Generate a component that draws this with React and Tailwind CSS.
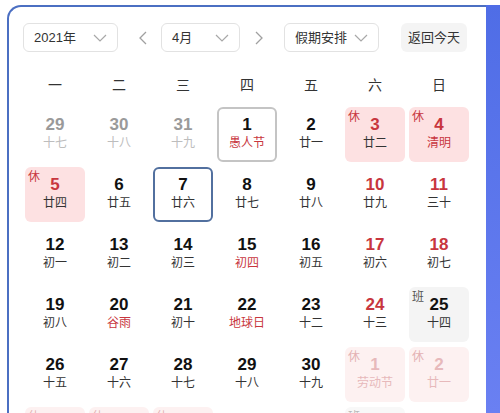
import React from "react";

const RED = "text-[#c8363e]";

const weekdays = ["一", "二", "三", "四", "五", "六", "日"];

// t: prev | next ; tag: 休 | 班 ; box: today | selected ; redNum / redLunar
const days = [
  { d: 29, l: "十七", t: "prev" },
  { d: 30, l: "十八", t: "prev" },
  { d: 31, l: "十九", t: "prev" },
  { d: 1, l: "愚人节", redLunar: true, box: "selected" },
  { d: 2, l: "廿一" },
  { d: 3, l: "廿二", tag: "休", redNum: true },
  { d: 4, l: "清明", tag: "休", redNum: true, redLunar: true },

  { d: 5, l: "廿四", tag: "休", redNum: true },
  { d: 6, l: "廿五" },
  { d: 7, l: "廿六", box: "today" },
  { d: 8, l: "廿七" },
  { d: 9, l: "廿八" },
  { d: 10, l: "廿九", redNum: true },
  { d: 11, l: "三十", redNum: true },

  { d: 12, l: "初一" },
  { d: 13, l: "初二" },
  { d: 14, l: "初三" },
  { d: 15, l: "初四", redLunar: true },
  { d: 16, l: "初五" },
  { d: 17, l: "初六", redNum: true },
  { d: 18, l: "初七", redNum: true },

  { d: 19, l: "初八" },
  { d: 20, l: "谷雨", redLunar: true },
  { d: 21, l: "初十" },
  { d: 22, l: "地球日", redLunar: true },
  { d: 23, l: "十二" },
  { d: 24, l: "十三", redNum: true },
  { d: 25, l: "十四", tag: "班" },

  { d: 26, l: "十五" },
  { d: 27, l: "十六" },
  { d: 28, l: "十七" },
  { d: 29, l: "十八" },
  { d: 30, l: "十九" },
  { d: 1, l: "劳动节", t: "next", tag: "休" },
  { d: 2, l: "廿一", t: "next", tag: "休" },

  { d: 3, l: "廿二", t: "next", tag: "休" },
  { d: 4, l: "青年节", t: "next", tag: "休" },
  { d: 5, l: "立夏", t: "next", tag: "休" },
  { d: 6, l: "廿五", t: "next" },
  { d: 7, l: "廿六", t: "next" },
  { d: 8, l: "廿七", t: "next", tag: "班" },
  { d: 9, l: "母亲节", t: "next" },
];

const Chevron = () => (
  <svg width="14" height="8" viewBox="0 0 14 8" fill="none">
    <polyline points="1,1 7,7 13,1" stroke="#a8a8a8" strokeWidth="1.2" />
  </svg>
);

const Arrow = ({ dir }) => (
  <svg width="8" height="14" viewBox="0 0 8 14" fill="none">
    <polyline
      points={dir === "left" ? "7,1 1,7 7,13" : "1,1 7,7 1,13"}
      stroke="#a0a0a0"
      strokeWidth="1.3"
    />
  </svg>
);

const Select = ({ label, width }) => (
  <div
    className={`h-[29px] ${width} flex items-center justify-between pl-[10px] pr-[10px] border border-[#e2e2e2] rounded-[6px] bg-white text-[13px] text-[#333]`}
  >
    <span>{label}</span>
    <Chevron />
  </div>
);

const DayCell = ({ day }) => {
  const faded = day.t === "next";
  const prev = day.t === "prev";

  let bg = "";
  if (day.tag === "休") bg = faded ? "bg-[#fdf1f1]" : "bg-[#fde1e2]";
  if (day.tag === "班") bg = faded ? "bg-[#f8f8f8]" : "bg-[#f4f4f4]";

  let border = "border-transparent";
  if (day.box === "today") border = "border-[#52709f]";
  if (day.box === "selected") border = "border-[#c4c4c4]";

  let numColor = "text-[#111]";
  if (day.redNum) numColor = RED;
  if (prev) numColor = "text-[#9a9a9a]";
  if (faded) numColor = day.tag === "休" ? "text-[#e7b9bb]" : "text-[#c8c8c8]";

  let lunarColor = "text-[#333]";
  if (day.redLunar) lunarColor = RED;
  if (prev) lunarColor = "text-[#bdbdbd]";
  if (faded) lunarColor = day.tag === "休" ? "text-[#e7b9bb]" : "text-[#c8c8c8]";

  let tagColor = day.tag === "休" ? RED : "text-[#555]";
  if (faded) tagColor = day.tag === "休" ? "text-[#e4b2b4]" : "text-[#b8b8b8]";

  return (
    <div
      className={`relative h-[55px] rounded-[6px] border-2 ${border} ${bg} flex flex-col items-center pt-[7px]`}
    >
      {day.tag && (
        <span className={`absolute left-[1px] top-[1px] text-[12px] leading-[14px] ${tagColor}`}>
          {day.tag}
        </span>
      )}
      <span className={`text-[17px] leading-[18px] font-bold ${numColor}`}>{day.d}</span>
      <span className={`mt-[1px] text-[12px] leading-[16px] ${lunarColor}`}>{day.l}</span>
    </div>
  );
};

export default function App() {
  return (
    <div
      className="w-[500px] h-[413px] overflow-hidden bg-white flex pt-[5px] pl-[7px]"
      style={{ fontFamily: '"Liberation Sans", "Noto Sans CJK SC", sans-serif' }}
    >
      <div className="flex-1 border-l-2 border-t-2 border-[#4b6fc2] rounded-tl-[14px] bg-white pl-[14px] pt-[16px]">
        <div className="flex items-center">
          <Select label="2021年" width="w-[95px]" />
          <div className="ml-[21px]">
            <Arrow dir="left" />
          </div>
          <div className="ml-[14px]">
            <Select label="4月" width="w-[79px]" />
          </div>
          <div className="ml-[15px]">
            <Arrow dir="right" />
          </div>
          <div className="ml-[21px]">
            <Select label="假期安排" width="w-[95px]" />
          </div>
          <button className="ml-[22px] h-[29px] w-[66px] rounded-[6px] bg-[#f4f4f4] text-[13px] text-[#333] flex items-center justify-center">
            返回今天
          </button>
        </div>

        <div className="ml-[2px] mt-[18px] grid grid-cols-[repeat(7,60px)] gap-x-[4px] h-[30px] leading-[30px] text-[14px] text-[#333]">
          {weekdays.map((w) => (
            <div key={w} className="text-center">
              {w}
            </div>
          ))}
        </div>

        <div className="ml-[2px] mt-[7px] grid grid-cols-[repeat(7,60px)] gap-x-[4px] gap-y-[5px]">
          {days.map((day, i) => (
            <DayCell key={i} day={day} />
          ))}
        </div>
      </div>
      <div className="w-[14px] h-full bg-gradient-to-b from-[#4f6de6] to-[#6a80f2]" />
    </div>
  );
}
